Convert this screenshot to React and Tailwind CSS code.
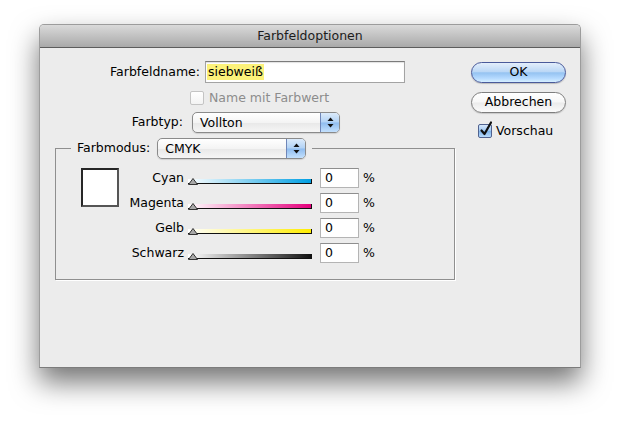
import React from "react";

const sliders = [
  { name: "Cyan", bar: "bg-[linear-gradient(to_right,#ffffff,#009fe3)]" },
  { name: "Magenta", bar: "bg-[linear-gradient(to_right,#ffffff,#e4007c)]" },
  { name: "Gelb", bar: "bg-[linear-gradient(to_right,#ffffff,#ffed00)]" },
  { name: "Schwarz", bar: "bg-[linear-gradient(to_right,#ffffff,#111111)]" },
];

function Arrows() {
  return (
    <svg width="7" height="11" viewBox="0 0 7 11">
      <path d="M3.5 0.5 L6.5 4 L0.5 4 Z" fill="#111" />
      <path d="M0.5 7 L6.5 7 L3.5 10.5 Z" fill="#111" />
    </svg>
  );
}

function Popup({ value, width }) {
  return (
    <div
      className={`flex h-[21px] ${width} overflow-hidden rounded-[5px] border border-[#8a8a8a] bg-[linear-gradient(to_bottom,#ffffff,#f4f4f4_50%,#e8e8e8_51%,#f6f6f6)] shadow-[0_1px_1px_rgba(0,0,0,0.12)]`}
    >
      <span className="flex-1 pl-[7px] leading-[19px]">{value}</span>
      <span className="flex w-[19px] items-center justify-center border-l border-[#6f86b8] bg-[linear-gradient(to_bottom,#dcebfb,#b2d2f5_48%,#8fbcef_52%,#c3e0fd)]">
        <Arrows />
      </span>
    </div>
  );
}

function Thumb() {
  return (
    <svg width="10" height="7" viewBox="0 0 10 7" className="shrink-0">
      <path d="M5 0.5 L9.5 6.5 L0.5 6.5 Z" fill="#a8a8a8" stroke="#333" strokeWidth="1" />
    </svg>
  );
}

export default function App() {
  return (
    <div className="min-h-[422px] bg-white pl-[39px] pt-[24px] font-['DejaVu_Sans',sans-serif] text-[12.5px] text-black">
      <div className="h-[344px] w-[542px] overflow-hidden rounded-t-[5px] border border-[#9c9c9c] border-b-[#7c7c7c] bg-[#ececec] shadow-[0_14px_28px_rgba(0,0,0,0.55)]">
        {/* title bar */}
        <div className="flex h-[23px] items-center justify-center border-b border-[#5c5c5c] bg-[linear-gradient(to_bottom,#dadada,#a9a9a9)] text-[#1c1c1c]">
          Farbfeldoptionen
        </div>

        <div className="flex">
          {/* left column */}
          <div className="w-[415px]">
            <div className="mt-[13px] flex h-[22px] items-center">
              <span className="w-[160px] text-right">Farbfeldname:</span>
              <div className="ml-[5px] flex h-[22px] w-[200px] items-center border border-[#a3a3a3] border-t-[#7b7b7b] bg-white pl-[1px] shadow-[inset_0_1px_1px_rgba(0,0,0,0.12)]">
                <span className="bg-[#fcf27a] px-[1px] leading-[16px]">siebweiß</span>
              </div>
            </div>

            <div className="mt-[8px] flex h-[14px] items-center">
              <span className="ml-[150px] h-[14px] w-[14px] rounded-[2px] border border-[#c4c4c4] bg-[linear-gradient(to_bottom,#ffffff,#f3f3f3)]" />
              <span className="ml-[5px] text-[#8c8c8c]">Name mit Farbwert</span>
            </div>

            <div className="mt-[7px] flex h-[21px] items-center">
              <span className="w-[143px] text-right">Farbtyp:</span>
              <div className="ml-[9px]">
                <Popup value="Vollton" width="w-[148px]" />
              </div>
            </div>

            <fieldset className="ml-[15px] mt-[5px] h-[142px] w-[400px] border border-[#8f8f8f] shadow-[1px_1px_0_#ffffff]">
              <legend className="ml-[15px] px-[6px]">
                <div className="flex items-center">
                  <span>Farbmodus:</span>
                  <div className="ml-[7px]">
                    <Popup value="CMYK" width="w-[149px]" />
                  </div>
                </div>
              </legend>

              <div className="mt-[9px] flex">
                <div className="ml-[25px] h-[39px] w-[38px] border-2 border-[#262626] border-b-[#555] border-r-[#555] bg-white" />
                <div className="flex flex-col gap-[5px]">
                  {sliders.map((s) => (
                    <div key={s.name} className="flex h-[20px] items-center">
                      <span className="w-[65px] text-right">{s.name}</span>
                      <div className="relative ml-[4px] flex h-[20px] w-[124px] items-end pb-[4px]">
                        <div className={`h-[5px] w-full border-b border-r border-[#111] ${s.bar}`} />
                        <div className="absolute bottom-[3px] left-0">
                          <Thumb />
                        </div>
                      </div>
                      <div className="ml-[8px] h-[20px] w-[39px] border border-[#b4b4b4] border-t-[#8e8e8e] bg-white pl-[4px] leading-[18px]">
                        0
                      </div>
                      <span className="ml-[4px]">%</span>
                    </div>
                  ))}
                </div>
              </div>
            </fieldset>
          </div>

          {/* right column */}
          <div className="ml-[16px] w-[95px]">
            <div className="mt-[14px] flex h-[21px] items-center justify-center rounded-full border border-[#4a5a9a] bg-[linear-gradient(to_bottom,#e3eefb,#bcd8f6_45%,#95c3f1_52%,#b5daff_80%,#d6efff)] shadow-[0_1px_1px_rgba(0,0,0,0.2)]">
              OK
            </div>
            <div className="mt-[9px] flex h-[21px] items-center justify-center rounded-full border border-[#7e7e7e] bg-[linear-gradient(to_bottom,#ffffff,#f7f7f7_48%,#ebebeb_52%,#fbfbfb)] shadow-[0_1px_1px_rgba(0,0,0,0.15)]">
              Abbrechen
            </div>
            <div className="mt-[10px] flex h-[16px] items-center">
              <span className="relative ml-[7px] h-[14px] w-[14px] rounded-[2px] border border-[#50628f] bg-[linear-gradient(to_bottom,#d7e7fa,#9cc6f2_50%,#7fb3ea_52%,#b8dbfc)]">
                <svg width="14" height="16" viewBox="0 0 14 16" className="absolute left-[0px] top-[-4px]">
                  <path d="M2.5 9.5 L5.5 13 L12 1.5" fill="none" stroke="#111" strokeWidth="2.2" strokeLinecap="round" strokeLinejoin="round" />
                </svg>
              </span>
              <span className="ml-[4px]">Vorschau</span>
            </div>
          </div>
        </div>
      </div>
    </div>
  );
}
